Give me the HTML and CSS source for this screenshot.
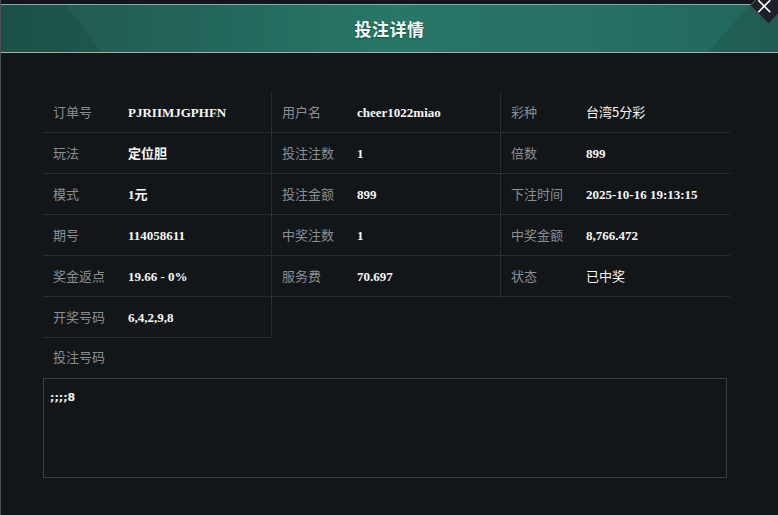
FILE: index.html
```html
<!DOCTYPE html>
<html lang="zh">
<head>
<meta charset="utf-8">
<title>投注详情</title>
<link rel="stylesheet" href="styles.css">
</head>
<body>
<div class="modal">
  <div class="topstrip"></div>
  <div class="header">
    <span class="shade-left"></span>
    <span class="shade-right"></span>
    <h1 class="title">投注详情</h1>
  </div>
  <div class="close">
    <svg viewBox="0 0 14 14" width="14" height="14"><path d="M1 1L13 13M13 1L1 13" stroke="#fff" stroke-width="1.6" fill="none"/></svg>
  </div>
  <div class="content">
    <div class="grid">
      <div class="cell"><span class="lbl">订单号</span><span class="val">PJRIIMJGPHFN</span></div>
      <div class="cell"><span class="lbl">用户名</span><span class="val">cheer1022miao</span></div>
      <div class="cell"><span class="lbl">彩种</span><span class="val cjk">台湾5分彩</span></div>
      <div class="cell"><span class="lbl">玩法</span><span class="val">定位胆</span></div>
      <div class="cell"><span class="lbl">投注注数</span><span class="val">1</span></div>
      <div class="cell"><span class="lbl">倍数</span><span class="val">899</span></div>
      <div class="cell"><span class="lbl">模式</span><span class="val">1元</span></div>
      <div class="cell"><span class="lbl">投注金额</span><span class="val">899</span></div>
      <div class="cell"><span class="lbl">下注时间</span><span class="val">2025-10-16 19:13:15</span></div>
      <div class="cell"><span class="lbl">期号</span><span class="val">114058611</span></div>
      <div class="cell"><span class="lbl">中奖注数</span><span class="val">1</span></div>
      <div class="cell"><span class="lbl">中奖金额</span><span class="val">8,766.472</span></div>
      <div class="cell"><span class="lbl">奖金返点</span><span class="val">19.66 - 0%</span></div>
      <div class="cell"><span class="lbl">服务费</span><span class="val">70.697</span></div>
      <div class="cell"><span class="lbl">状态</span><span class="val cjk">已中奖</span></div>
      <div class="cell"><span class="lbl">开奖号码</span><span class="val">6,4,2,9,8</span></div>
    </div>
    <div class="codes-label">投注号码</div>
    <div class="codes-box">;;;;8</div>
  </div>
</div>
</body>
</html>
```

FILE: styles.css
```css
* { box-sizing: border-box; }
html, body {
  margin: 0;
  padding: 0;
  background: #121619;
  width: 778px;
  height: 515px;
  overflow: hidden;
}
.modal {
  position: relative;
  height: 515px;
  border-left: 1px solid #4a4f53;
  background: #121619;
  font-family: "Noto Sans CJK SC", "Noto Sans", sans-serif;
}
.topstrip {
  height: 4px;
  background: #14141c;
}
.header {
  position: relative;
  height: 49px;
  border-top: 1px solid #8fa8a2;
  border-bottom: 1px solid #9fb6b1;
  background: linear-gradient(90deg, #1f574c 0%, #23655a 25%, #277767 50%, #267064 75%, #23665b 100%);
  overflow: hidden;
  display: flex;
  align-items: center;
  justify-content: center;
}
.shade-left {
  position: absolute;
  left: 0;
  top: 0;
  width: 100px;
  height: 100%;
  background: rgba(12,34,30,0.12);
  clip-path: polygon(0 0, 65% 0, 100% 100%, 0 100%);
}
.shade-right {
  position: absolute;
  right: 0;
  top: 0;
  width: 100px;
  height: 100%;
  background: rgba(12,34,30,0.14);
  clip-path: polygon(72% 0, 100% 0, 100% 100%, 30% 100%);
}
.title {
  position: relative;
  margin: 0 0 1px;
  font-size: 17px;
  font-weight: bold;
  color: #f4f7f6;
  letter-spacing: 0.5px;
  text-shadow: 0 1px 2px rgba(0,0,0,0.35);
}
.close {
  position: absolute;
  right: -4px;
  top: -8px;
  width: 27px;
  height: 27px;
  background: #1b2126;
  border: 1px solid #4d5459;
  transform: rotate(45deg);
}
.close svg {
  position: absolute;
  left: 3px;
  top: 9px;
  transform: rotate(-45deg);
}
.content {
  padding: 39px 0 0 42px;
}
.grid {
  display: grid;
  grid-template-columns: 229px 229px 229px;
  width: 687px;
}
.cell {
  height: 41px;
  line-height: 40px;
  font-size: 13px;
  padding-left: 10px;
  white-space: nowrap;
  border-bottom: 1px dotted #3d4145;
  border-right: 1px dotted #3d4145;
}
.cell:nth-child(3n) {
  border-right: none;
}
.lbl {
  display: inline-block;
  width: 75px;
  font-size: 13px;
  color: #8a8e92;
  vertical-align: baseline;
}
.val {
  display: inline-block;
  font-family: "Liberation Serif", "Noto Sans CJK SC", serif;
  font-weight: bold;
  font-size: 13px;
  color: #f7f7f7;
  vertical-align: baseline;
}
.val.cjk {
  font-family: "Noto Sans CJK SC", sans-serif;
  font-weight: normal;
}
.codes-label {
  height: 40px;
  line-height: 38px;
  padding-left: 10px;
  font-size: 13px;
  color: #8a8e92;
}
.codes-box {
  width: 684px;
  height: 100px;
  border: 1px solid #3a3e42;
  padding: 12px 6px;
  font-family: "DejaVu Sans", sans-serif;
  font-weight: bold;
  font-size: 11px;
  line-height: 14px;
  color: #f0f0f0;
}
```
